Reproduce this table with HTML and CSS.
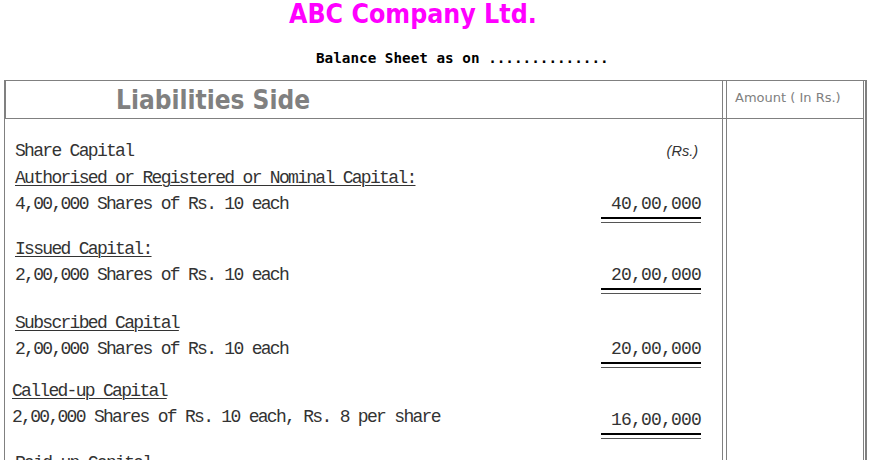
FILE: index.html
```html
<!DOCTYPE html>
<html lang="en">
<head>
  <meta charset="UTF-8">
  <title>Balance Sheet</title>
  <link rel="stylesheet" href="styles.css">
</head>
<body>

  <h1 class="company">ABC Company Ltd.</h1>
  <p class="caption">Balance Sheet as on ..............</p>

  <div class="sheet">
    <div class="sheet-head">
      <div class="head-main">Liabilities Side</div>
      <div class="head-amount">Amount ( In Rs.)</div>
    </div>

    <div class="sheet-body">
      <div class="body-main">

        <div class="group">
          <div class="row title-row">
            <span>Share Capital</span>
            <span class="unit">(Rs.)</span>
          </div>
          <div class="row heading"><u>Authorised or Registered or Nominal Capital:</u></div>
          <div class="row entry">
            <span>4,00,000 Shares of Rs. 10 each</span>
            <span class="amt">40,00,000</span>
          </div>
        </div>

        <div class="group">
          <div class="row heading"><u>Issued Capital:</u></div>
          <div class="row entry">
            <span>2,00,000 Shares of Rs. 10 each</span>
            <span class="amt">20,00,000</span>
          </div>
        </div>

        <div class="group wide">
          <div class="row heading"><u>Subscribed Capital</u></div>
          <div class="row entry">
            <span>2,00,000 Shares of Rs. 10 each</span>
            <span class="amt">20,00,000</span>
          </div>
        </div>

        <div class="group narrow shifted">
          <div class="row heading"><u>Called-up Capital</u></div>
          <div class="row entry">
            <span>2,00,000 Shares of Rs. 10 each, Rs. 8 per share</span>
            <span class="amt low">16,00,000</span>
          </div>
        </div>

        <div class="group">
          <div class="row heading"><u>Paid-up Capital</u></div>
          <div class="row entry">
            <span>2,00,000 Shares of Rs. 10 each, Rs. 8 per share</span>
            <span class="amt">16,00,000</span>
          </div>
        </div>

      </div>
      <div class="body-amount"></div>
    </div>
  </div>

</body>
</html>
```

FILE: styles.css
```css
body {
  margin: 0;
  background: #fff;
  color: #333;
}

/* page titles */
.company {
  margin: 0;
  padding-left: 289px;
  font-family: "DejaVu Sans Condensed", "DejaVu Sans", sans-serif;
  font-stretch: condensed;
  font-weight: bold;
  font-size: 26.5px;
  line-height: 28px;
  color: #ff00ff;
}

.caption {
  margin: 20px 0 12px 0;
  padding-left: 316px;
  font-family: "DejaVu Sans Mono", monospace;
  font-weight: bold;
  font-size: 14.3px;
  line-height: 20px;
  color: #000;
}

/* the table */
.sheet {
  margin-left: 4px;
  width: 863px;
  box-sizing: border-box;
  border-top: 1px solid #808080;
  border-right: 2px solid #808080;
  padding-right: 1px;
}

.sheet-head,
.sheet-body {
  display: grid;
  grid-template-columns: 719px 138px;
  column-gap: 3px;
}

.sheet-head {
  border-bottom: 1px solid #808080;
  height: 37px;
}

.head-main {
  border-left: 2px solid #808080;
  border-right: 1px solid #808080;
  padding: 2px 0 0 110px;
  font-family: "DejaVu Sans Condensed", "DejaVu Sans", sans-serif;
  font-stretch: condensed;
  font-weight: bold;
  font-size: 26px;
  line-height: 35px;
  color: #808080;
}

.head-amount {
  border-left: 1px solid #808080;
  border-right: 1px solid #808080;
  padding: 9px 0 0 8px;
  font-family: "DejaVu Sans", sans-serif;
  font-size: 13px;
  line-height: 16px;
  color: #808080;
}

.body-main {
  border-left: 1px solid #808080;
  border-right: 1px solid #808080;
  padding: 22px 21px 40px 10px;
  font-family: "Liberation Mono", "Courier New", monospace;
  font-size: 18px;
  letter-spacing: -1.7px;
}

.body-amount {
  border-left: 1px solid #808080;
  border-right: 1px solid #808080;
}

/* rows */
.group {
  margin-top: 11px;
}

.group:first-child {
  margin-top: 0;
}

.group:nth-child(2) {
  margin-top: 13px;
}

.group.wide {
  margin-top: 16px;
}

.group.narrow {
  margin-top: 10px;
}

.group.shifted {
  margin-left: -3px;
}

.row {
  display: flex;
  justify-content: space-between;
  align-items: flex-start;
  line-height: 20px;
  white-space: nowrap;
}

.heading {
  margin-top: 4px;
  padding-top: 3px;
}

.group .heading:first-child {
  margin-top: 0;
}

.heading u {
  text-decoration-thickness: 1px;
  text-underline-offset: 2px;
}

.entry {
  margin-top: 6px;
}

.unit {
  margin-right: 3px;
  font-family: "Liberation Sans", Arial, sans-serif;
  font-style: italic;
  font-size: 14.5px;
  letter-spacing: 0;
}

.amt {
  display: block;
  width: 100px;
  text-align: right;
  letter-spacing: -0.8px;
}

.amt.low {
  padding-top: 3px;
}

/* double rule under totals */
.amt::after {
  content: "";
  display: block;
  margin-top: 3px;
  height: 3px;
  border-top: 2px solid #000;
  border-bottom: 1px solid #555;
}
```
